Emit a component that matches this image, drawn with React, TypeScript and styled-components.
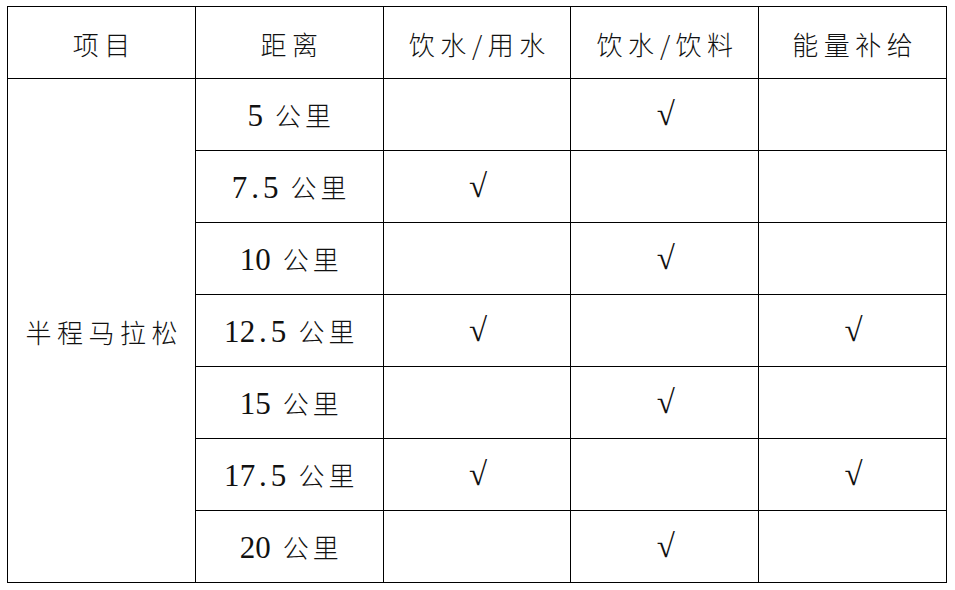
import React from "react";
import styled, { createGlobalStyle } from "styled-components";

const GlobalStyle = createGlobalStyle`
  html, body {
    margin: 0;
    padding: 0;
    background: #ffffff;
  }
  body {
    padding: 6px 0 0 7px;
    font-family: "Noto Sans CJK SC", "Noto Sans", sans-serif;
    color: #111;
  }
`;

const Table = styled.table`
  border-collapse: collapse;
  table-layout: fixed;
  width: 940px;
`;

const Row = styled.tr`
  height: 72px;
`;

const Cell = styled.td`
  border: 1px solid #000;
  padding: 0;
  text-align: center;
  vertical-align: middle;
  font-size: 26px;
  font-weight: 300;
  line-height: 1;
  letter-spacing: 5.5px;
  white-space: nowrap;
`;

const Label = styled.span`
  display: inline-block;
  margin-right: -5.5px;
  padding-top: 2px;
`;

const Slash = styled.span`
  display: inline-block;
  width: 11px;
  margin-right: 5px;
  letter-spacing: 0;
  text-align: center;
`;

const Distance = styled.span`
  display: inline-flex;
  align-items: baseline;
  letter-spacing: 0;
  padding-top: 2px;
`;

const DigitSlot = styled.span`
  display: inline-block;
  width: 15.6px;
  text-align: center;
  font-family: "Liberation Serif", "Times New Roman", serif;
  font-size: 31px;
`;

const Unit = styled.span`
  margin-left: 12px;
  letter-spacing: 4px;
  margin-right: -4px;
`;

const Check = styled.span`
  display: inline-block;
  font-family: "Liberation Serif", "Times New Roman", serif;
  font-size: 33px;
  letter-spacing: 0;
  transform: translateX(1px);
`;

const headers = ["项目", "距离", "饮水/用水", "饮水/饮料", "能量补给"];

type Stop = { km: string; water: boolean; drink: boolean; energy: boolean };

const stops: Stop[] = [
  { km: "5", water: false, drink: true, energy: false },
  { km: "7.5", water: true, drink: false, energy: false },
  { km: "10", water: false, drink: true, energy: false },
  { km: "12.5", water: true, drink: false, energy: true },
  { km: "15", water: false, drink: true, energy: false },
  { km: "17.5", water: true, drink: false, energy: true },
  { km: "20", water: false, drink: true, energy: false },
];

function HeadText({ text }: { text: string }) {
  const parts = text.split("/");
  if (parts.length === 1) return <Label>{text}</Label>;
  return (
    <Label>
      {parts[0]}
      <Slash>/</Slash>
      {parts[1]}
    </Label>
  );
}

function Km({ value }: { value: string }) {
  return (
    <Distance>
      {value.split("").map((c, i) => (
        <DigitSlot key={i}>{c}</DigitSlot>
      ))}
      <Unit>公里</Unit>
    </Distance>
  );
}

function Mark({ on }: { on: boolean }) {
  return on ? <Check>√</Check> : null;
}

export default function App() {
  return (
    <>
      <GlobalStyle />
      <Table>
        <tbody>
          <Row>
            {headers.map((h) => (
              <Cell key={h}>
                <HeadText text={h} />
              </Cell>
            ))}
          </Row>
          {stops.map((r, i) => (
            <Row key={r.km}>
              {i === 0 && (
                <Cell rowSpan={stops.length}>
                  <Label>半程马拉松</Label>
                </Cell>
              )}
              <Cell>
                <Km value={r.km} />
              </Cell>
              <Cell>
                <Mark on={r.water} />
              </Cell>
              <Cell>
                <Mark on={r.drink} />
              </Cell>
              <Cell>
                <Mark on={r.energy} />
              </Cell>
            </Row>
          ))}
        </tbody>
      </Table>
    </>
  );
}
